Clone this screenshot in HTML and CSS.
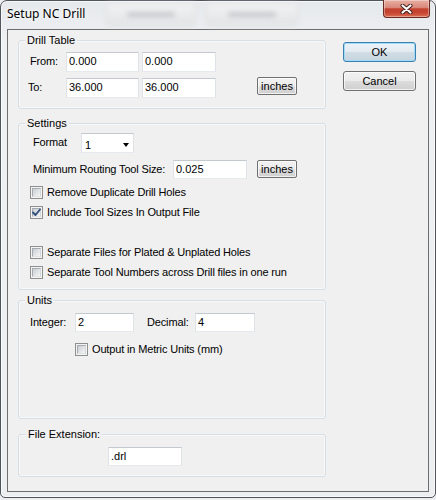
FILE: index.html
```html
<!DOCTYPE html>
<html lang="en">
<head>
<meta charset="utf-8">
<title>Setup NC Drill</title>
<link rel="stylesheet" href="styles.css">
</head>
<body>
<div class="window">
  <div class="titlebar">
    <span class="title">Setup NC Drill</span>
    <span class="ghost ghost-1"><span class="ghost-text"></span></span>
    <span class="ghost ghost-2"><span class="ghost-text"></span></span>
    <button class="close" aria-label="Close">
      <svg width="13" height="10" viewBox="0 0 13 10">
        <path d="M2.5 1.5 L10.5 8.5 M10.5 1.5 L2.5 8.5" stroke="#3b1a16" stroke-width="4" stroke-linecap="round" fill="none"/>
        <path d="M2.5 1.5 L10.5 8.5 M10.5 1.5 L2.5 8.5" stroke="#ffffff" stroke-width="2.2" stroke-linecap="round" fill="none"/>
      </svg>
    </button>
  </div>
  <div class="client">
    <div class="groups">
      <div class="group g-drill">
        <span class="legend">Drill Table</span>
        <div class="row">
          <span class="lbl w-from">From:</span>
          <span class="tb w73">0.000</span>
          <span class="tb w74 ml3">0.000</span>
        </div>
        <div class="row row-to">
          <span class="lbl w-from lbl-to">To:</span>
          <span class="tb w73">36.000</span>
          <span class="tb w74 ml3">36.000</span>
          <span class="btn btn-small inches-drill">inches</span>
        </div>
      </div>

      <div class="group g-settings">
        <span class="legend">Settings</span>
        <div class="row">
          <span class="lbl w-format">Format</span>
          <span class="dropdown"><span class="dd-value">1</span><span class="dd-arrow"></span></span>
        </div>
        <div class="row row-min">
          <span class="lbl w-min">Minimum Routing Tool Size:</span>
          <span class="tb w74 h19">0.025</span>
          <span class="btn btn-small inches-min">inches</span>
        </div>
        <div class="check check-first">
          <span class="cb"></span>
          <span class="check-label">Remove Duplicate Drill Holes</span>
        </div>
        <div class="check">
          <span class="cb checked">
            <svg class="tick" width="11" height="11" viewBox="0 0 11 11"><path d="M2 5.5 L4.5 8 L9 2.5" stroke="#34507c" stroke-width="1.9" fill="none" stroke-linecap="round" stroke-linejoin="round"/></svg>
          </span>
          <span class="check-label">Include Tool Sizes In Output File</span>
        </div>
        <div class="check check-gap">
          <span class="cb"></span>
          <span class="check-label">Separate Files for Plated &amp; Unplated Holes</span>
        </div>
        <div class="check">
          <span class="cb"></span>
          <span class="check-label">Separate Tool Numbers across Drill files in one run</span>
        </div>
      </div>

      <div class="group g-units">
        <span class="legend">Units</span>
        <div class="row">
          <span class="lbl w-int">Integer:</span>
          <span class="tb w59 h19">2</span>
          <span class="lbl w-dec">Decimal:</span>
          <span class="tb w60 h19">4</span>
        </div>
        <div class="check check-metric">
          <span class="cb"></span>
          <span class="check-label">Output in Metric Units (mm)</span>
        </div>
      </div>

      <div class="group g-ext">
        <span class="legend legend-ext">File Extension:</span>
        <span class="tb w74 h19">.drl</span>
      </div>
    </div>

    <div class="actions">
      <button class="btn btn-default">OK</button>
      <button class="btn">Cancel</button>
    </div>
  </div>
</div>
</body>
</html>
```
FILE: styles.css
```css
* { box-sizing: border-box; }

html, body {
  margin: 0;
  padding: 0;
}

body {
  width: 436px;
  height: 500px;
  overflow: hidden;
  background: #eceef0;
  font-family: "Liberation Sans", Arial, sans-serif;
  font-size: 11px;
  line-height: 14px;
  color: #000;
}

/* ---------- window frame ---------- */
.window {
  width: 436px;
  height: 498px;
  border: 1px solid #50555b;
  border-radius: 7px 7px 5px 5px;
  background: linear-gradient(180deg, #e6e9ec 0px, #eef0f2 40px, #eceef0 100%);
  box-shadow: inset 0 0 0 1px rgba(255, 255, 255, 0.65);
  display: flex;
  flex-direction: column;
}

.titlebar {
  height: 28px;
  display: flex;
  align-items: flex-start;
  flex: none;
}

.title {
  width: 96px;
  margin: 5px 0 0 6px;
  font-family: "Noto Sans", "Open Sans", sans-serif;
  font-size: 12px;
  line-height: 16px;
  color: #000;
  white-space: nowrap;
  text-shadow: 0 0 6px #fff, 0 0 3px #fff;
}

.ghost {
  height: 23px;
  margin-top: 2px;
  border-radius: 3px;
  border: 1px solid #d6d8da;
  background: linear-gradient(180deg, #f4f4f5, #e2e3e5);
  filter: blur(2.5px);
  opacity: 0.85;
  display: flex;
  align-items: center;
  justify-content: center;
}

.ghost-1 { width: 90px; margin-left: 3px; }
.ghost-2 { width: 92px; margin-left: 10px; }

.ghost-text {
  width: 48px;
  height: 5px;
  background: #c3c5c8;
  border-radius: 2px;
}

.close {
  width: 47px;
  height: 18px;
  margin: -1px 5px 0 auto;
  padding: 0;
  border: 1px solid #6b2a22;
  border-top: none;
  border-radius: 0 0 4px 4px;
  background: linear-gradient(180deg, #e8b0a3 0%, #d9887a 45%, #c3412f 52%, #c54632 75%, #dc6e52 100%);
  box-shadow: inset 0 0 0 1px rgba(255, 255, 255, 0.35);
  display: flex;
  align-items: center;
  justify-content: center;
}

.close svg { display: block; }

/* ---------- client area ---------- */
.client {
  height: 463px;
  margin: 0 6px;
  border: 1px solid #6e6e6e;
  background: #f0f0f0;
  display: flex;
  align-items: flex-start;
  padding: 10px 0 0 10px;
  flex: none;
}

.groups {
  width: 308px;
  display: flex;
  flex-direction: column;
  flex: none;
}

.group {
  position: relative;
  border: 1px solid #d5dfe5;
  border-radius: 3px;
  box-shadow: inset 0 0 0 1px rgba(255, 255, 255, 0.5);
}

.legend {
  position: absolute;
  top: -8px;
  left: 6px;
  padding: 0 2px;
  background: #f0f0f0;
  line-height: 14px;
  white-space: nowrap;
}

.legend-ext { left: 7px; }

.g-drill {
  height: 69px;
  padding: 11px 0 0 11px;
}

.g-settings {
  height: 167px;
  margin-top: 14px;
  padding: 9px 0 0 14px;
}

.g-units {
  height: 119px;
  margin-top: 10px;
  padding: 12px 0 0 11px;
}

.g-ext {
  height: 43px;
  margin-top: 15px;
  padding: 12px 0 0 89px;
}

.row {
  display: flex;
  align-items: flex-start;
}

.row-to { margin-top: 6px; }
.row-min { margin-top: 7px; }

.lbl {
  padding-top: 2px;
  white-space: nowrap;
  letter-spacing: -0.15px;
  flex: none;
}

.w-from { width: 36px; }
.lbl-to { margin-left: -2px; width: 38px; }
.w-format { width: 48px; }
.w-min { width: 140px; }
.w-int { width: 45px; }
.w-dec { width: 48px; margin-left: 13px; }

/* ---------- text boxes ---------- */
.tb {
  display: block;
  height: 20px;
  padding: 1px 2px;
  background: #fff;
  border: 1px solid;
  border-color: #c4c9cf #dfe3e8 #e6eaee #dfe3e8;
  line-height: 14px;
  white-space: nowrap;
  flex: none;
}

.h19 { height: 19px; }
.w59 { width: 59px; }
.w60 { width: 60px; }
.w73 { width: 73px; }
.w74 { width: 74px; }
.ml3 { margin-left: 3px; }

.dropdown {
  width: 53px;
  height: 20px;
  padding: 4px 0 0 3px;
  background: #fff;
  border: 1px solid;
  border-color: #c4c9cf #dfe3e8 #e6eaee #dfe3e8;
  display: flex;
  align-items: flex-start;
  flex: none;
}

.dd-value {
  line-height: 14px;
  flex: 1;
}

.dd-arrow {
  width: 0;
  height: 0;
  margin: 5px 4px 0 0;
  border-left: 3.5px solid transparent;
  border-right: 3.5px solid transparent;
  border-top: 4px solid #000;
}

/* ---------- buttons ---------- */
.btn {
  font: inherit;
  color: #000;
  border: 1px solid #707070;
  border-radius: 3px;
  background: linear-gradient(180deg, #f2f2f2 0%, #ebebeb 50%, #dddddd 51%, #cfcfcf 100%);
  box-shadow: inset 0 0 0 1px rgba(255, 255, 255, 0.7);
  padding: 0;
  display: flex;
  align-items: center;
  justify-content: center;
  line-height: 14px;
  white-space: nowrap;
}

.btn-small {
  width: 40px;
  height: 18px;
  flex: none;
  border-radius: 2px;
}

.inches-drill { margin: -1px 0 0 41px; }
.inches-min { margin: 0 0 0 10px; }

.actions {
  margin: 2px 0 0 17px;
  display: flex;
  flex-direction: column;
  gap: 9px;
}

.actions .btn {
  width: 73px;
  height: 20px;
}

.btn-default {
  border-color: #3c7fb1;
  box-shadow: inset 0 0 0 1px #9fdcf7;
  background: linear-gradient(180deg, #edf3f7 0%, #e2eaf0 50%, #d2dde6 51%, #c6d4df 100%);
}

/* ---------- checkboxes ---------- */
.check {
  display: flex;
  align-items: flex-start;
  margin-top: 7px;
  margin-left: -3px;
}

.check-first { margin-top: 7px; }
.check-gap { margin-top: 27px; }
.check-metric { margin: 11px 0 0 45px; }

.cb {
  position: relative;
  width: 13px;
  height: 13px;
  border: 1px solid #8e8f8f;
  background: #f4f4f4;
  flex: none;
}

.cb::before {
  content: "";
  position: absolute;
  inset: 1px;
  border: 1px solid;
  border-color: #a6abb1 #d3d6da #e2e4e6 #a6abb1;
  background: linear-gradient(135deg, #c9cdd2 0%, #e4e6e8 60%, #f3f3f4 100%);
}

.tick {
  position: absolute;
  left: 0;
  top: 0;
}

.check-label {
  margin: -1px 0 0 4px;
  white-space: nowrap;
  letter-spacing: -0.15px;
}
```
